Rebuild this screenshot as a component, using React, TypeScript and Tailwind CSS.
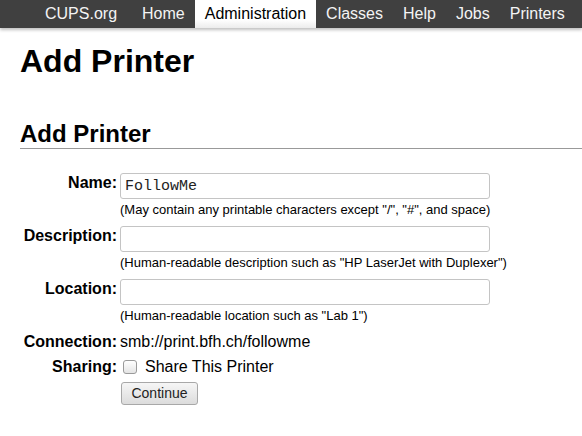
const navItems = ["Home", "Administration", "Classes", "Help", "Jobs", "Printers"];

function Field({ label, value, hint }: { label: string; value?: string; hint: string }) {
  return (
    <>
      <div className="text-right pr-[3px] pt-[1px] font-bold text-[16px] leading-[18px]">{label}</div>
      <div className="mb-[8px]">
        <input
          defaultValue={value}
          className="block w-[370px] h-[26px] border border-[#c4c4c4] rounded-[3px] px-[4px] bg-white text-[15px] font-['Liberation_Mono',monospace] text-[#222] outline-none"
        />
        <div className="mt-[3px] text-[13px] leading-[16px]">{hint}</div>
      </div>
    </>
  );
}

export default function App() {
  return (
    <div className="min-h-[436px] bg-white text-black font-['Liberation_Sans',Arial,sans-serif]">
      <nav className="h-[28px] bg-[#404040] flex pl-[35px] shadow-[0_2px_3px_rgba(0,0,0,0.25)]">
        <a className="px-[10px] mr-[5px] text-[16px] leading-[28px] text-[#f4f4f4]">CUPS.org</a>
        {navItems.map((n) => (
          <a
            key={n}
            className={`px-[10px] text-[16px] leading-[28px] ${
              n === "Administration" ? "bg-gradient-to-b from-white from-70% to-[#ececec] text-black" : "text-[#f4f4f4]"
            }`}
          >
            {n}
          </a>
        ))}
      </nav>

      <div className="pl-[20px]">
        <h1 className="mt-[15px] text-[32px] leading-[36px] font-bold">Add Printer</h1>
        <h2 className="mt-[41px] text-[24px] leading-[28px] font-bold border-b border-[#999]">Add Printer</h2>

        <div className="mt-[24px] grid grid-cols-[100px_1fr] items-start">
          <Field label="Name:" value="FollowMe" hint={'(May contain any printable characters except "/", "#", and space)'} />
          <Field label="Description:" hint={'(Human-readable description such as "HP LaserJet with Duplexer")'} />
          <Field label="Location:" hint={'(Human-readable location such as "Lab 1")'} />

          <div className="text-right pr-[3px] mt-[1px] font-bold text-[16px] leading-[18px]">Connection:</div>
          <div className="mt-[1px] text-[16px] leading-[18px]">smb://print.bfh.ch/followme</div>

          <div className="text-right pr-[3px] mt-[7px] font-bold text-[16px] leading-[18px]">Sharing:</div>
          <label className="mt-[7px] flex items-center text-[16px] leading-[18px]">
            <span className="ml-[3px] mr-[8px] w-[14px] h-[14px] border border-[#9a9a9a] rounded-[3px] bg-gradient-to-b from-white to-[#e4e4e4]" />
            Share This Printer
          </label>

          <div />
          <div className="mt-[5px]">
            <button className="ml-[1px] w-[77px] h-[23px] border border-[#a8a8a8] rounded-[3px] bg-gradient-to-b from-[#f6f6f6] to-[#dcdcdc] text-[14px] leading-[21px] text-[#222]">
              Continue
            </button>
          </div>
        </div>
      </div>
    </div>
  );
}
